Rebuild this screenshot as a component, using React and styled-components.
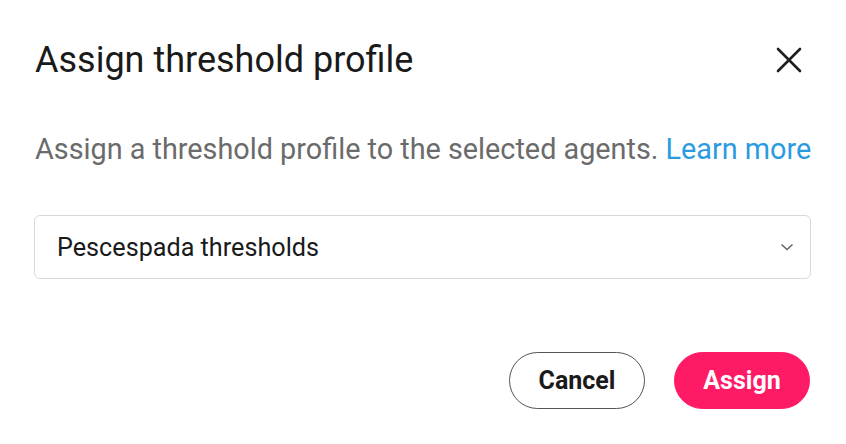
import React from 'react'
import styled, { createGlobalStyle } from 'styled-components'

const Global = createGlobalStyle`
  body {
    margin: 0;
    background: #fff;
    font-family: Roboto, "Liberation Sans", sans-serif;
  }
`

function App() {
  return (
    <>
      <Global />
      <Dialog>
        <Header>
          <Title>Assign threshold profile</Title>
          <CloseButton aria-label="Close">
            <svg width="26" height="26" viewBox="0 0 26 26">
              <path d="M2 2 L24 24 M24 2 L2 24" stroke="#1f1f1f" strokeWidth="2.6" strokeLinecap="round" />
            </svg>
          </CloseButton>
        </Header>
        <Description>
          Assign a threshold profile to the selected agents. <Link href="#">Learn more</Link>
        </Description>
        <Select>
          <span>Pescespada thresholds</span>
          <svg width="14" height="8" viewBox="0 0 14 8">
            <path d="M1.5 1.5 L7 6.5 L12.5 1.5" fill="none" stroke="#666" strokeWidth="1.6" />
          </svg>
        </Select>
        <Footer>
          <Button>Cancel</Button>
          <Button primary>Assign</Button>
        </Footer>
      </Dialog>
    </>
  )
}

export default App

const Dialog = styled.div`
  width: 846px;
  height: 444px;
  box-sizing: border-box;
  padding: 38px 36px 0 35px;
  display: flex;
  flex-direction: column;
`

const Header = styled.div`
  display: flex;
  align-items: center;
  justify-content: space-between;
`

const Title = styled.h1`
  margin: 0;
  font-size: 36px;
  font-weight: 400;
  color: #1a1a1a;
  line-height: 44px;
`

const CloseButton = styled.button`
  border: none;
  background: none;
  padding: 0;
  margin-right: 8px;
  display: flex;
  cursor: pointer;
`

const Description = styled.p`
  margin: 49px 0 0;
  font-size: 28.8px;
  line-height: 36px;
  color: #6b6b6b;
  white-space: nowrap;
`

const Link = styled.a`
  color: #2b9be0;
  text-decoration: none;
`

const Select = styled.div`
  margin-top: 48px;
  height: 64px;
  box-sizing: border-box;
  border: 1px solid #d9d9d9;
  border-radius: 6px;
  padding: 0 16px 0 22px;
  display: flex;
  align-items: center;
  justify-content: space-between;
  font-size: 25.2px;
  color: #1a1a1a;
  margin-right: -1px;
  margin-left: -1px;
`

const Footer = styled.div`
  margin-top: 73px;
  display: flex;
  justify-content: flex-end;
  gap: 29px;
`

const Button = styled.button`
  height: 57px;
  width: 136px;
  padding: 0;
  border-radius: 29px;
  font-family: Roboto, "Liberation Sans", sans-serif;
  font-size: 25px;
  font-weight: 700;
  cursor: pointer;
  border: 1px solid ${p => (p.primary ? '#ff1a66' : '#555')};
  background: ${p => (p.primary ? '#ff1a66' : '#fff')};
  color: ${p => (p.primary ? '#fff' : '#1a1a1a')};
`
